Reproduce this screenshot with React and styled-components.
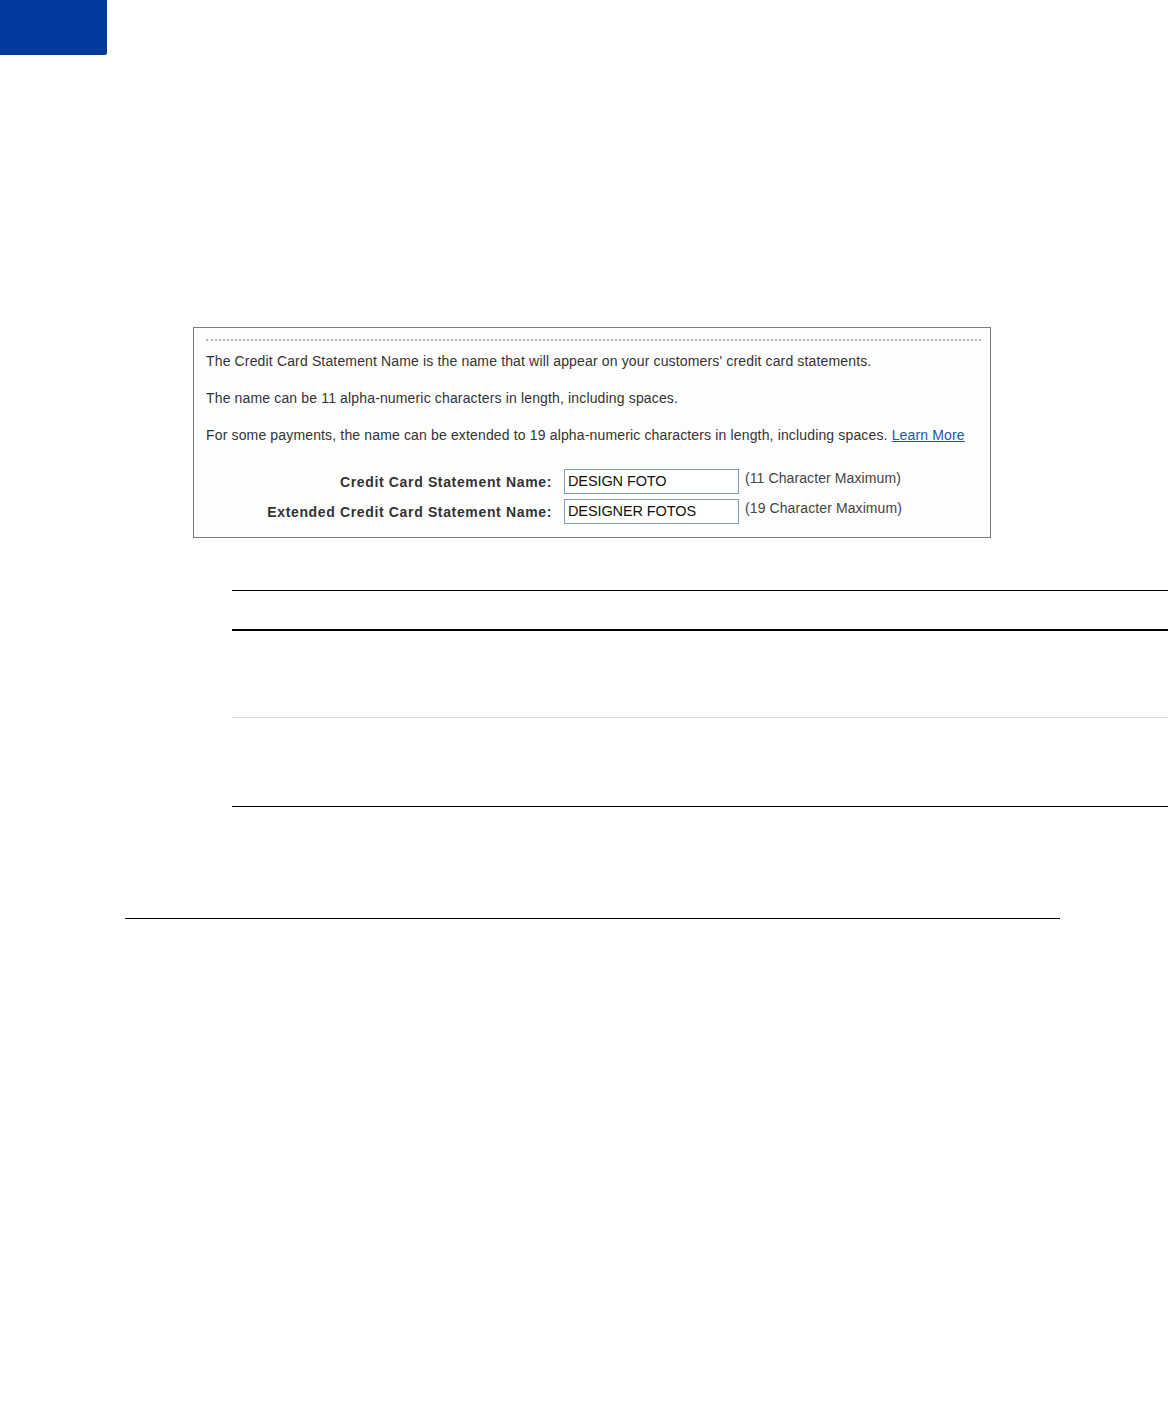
import styled, { createGlobalStyle } from "styled-components";

const GlobalStyle = createGlobalStyle`
  body {
    margin: 0;
    background: #fff;
    font-family: "Liberation Sans", Arial, sans-serif;
  }
`

const Page = styled.div`
  width: 1168px;
  height: 1414px;
  display: flex;
  flex-direction: column;
  background: #fff;
  overflow: hidden;
`
const Tab = styled.div`
  width: 107px;
  height: 55px;
  background: #003a9d;
  border-bottom-right-radius: 2px;
`
const Figure = styled.div`
  box-sizing: border-box;
  width: 798px;
  height: 211px;
  margin: 272px 0 0 193px;
  padding: 11px 9px 0 12px;
  border: 1px solid #7a7a7a;
  background: #fdfdfd;
  color: #333;
  font-size: 14px;
  letter-spacing: 0.15px;
`
const Dotted = styled.div`
  border-top: 2px dotted #b4b4b4;
  margin-bottom: 12px;
`
const Para = styled.p`
  margin: 0;
  height: 37px;
  line-height: 16px;
  white-space: nowrap;
`
const Link = styled.a`
  color: #2456a6;
  text-decoration: underline;
`
const Form = styled.div`
  display: grid;
  grid-template-columns: 346px 175px auto;
  column-gap: 12px;
  row-gap: 5px;
  margin-top: 5px;
  align-items: center;
`
const Label = styled.label`
  text-align: right;
  font-weight: bold;
  font-size: 14px;
  letter-spacing: 0.65px;
  color: #333;
`
const Input = styled.div`
  box-sizing: border-box;
  height: 25px;
  border: 1px solid #7f9db9;
  background: #fff;
  padding: 3px 0 0 3px;
  font-size: 14.5px;
  letter-spacing: -0.1px;
  color: #111;
  white-space: nowrap;
`
const Hint = styled.span`
  margin-left: -6px;
  margin-top: -8px;
  font-size: 14px;
  letter-spacing: 0.1px;
  color: #444;
`
const Table = styled.div`
  margin: 52px 0 0 232px;
  width: 936px;
  border-top: 1px solid #000;
`
const Row = styled.div`
  height: ${p => p.$h}px;
  border-bottom: ${p => p.$b};
`
const Rule = styled.div`
  margin: 111px 0 0 125px;
  width: 935px;
  border-top: 1px solid #000;
`

const fields = [
  { label: "Credit Card Statement Name:", value: "DESIGN FOTO", hint: "(11 Character Maximum)" },
  { label: "Extended Credit Card Statement Name:", value: "DESIGNER FOTOS", hint: "(19 Character Maximum)" },
]

function App() {
  return (
    <Page>
      <GlobalStyle />
      <Tab />
      <Figure>
        <Dotted />
        <Para>The Credit Card Statement Name is the name that will appear on your customers' credit card statements.</Para>
        <Para>The name can be 11 alpha-numeric characters in length, including spaces.</Para>
        <Para>For some payments, the name can be extended to 19 alpha-numeric characters in length, including spaces. <Link href="#">Learn More</Link></Para>
        <Form>
          {fields.map(f => (
            <>
              <Label key={f.label}>{f.label}</Label>
              <Input>{f.value}</Input>
              <Hint>{f.hint}</Hint>
            </>
          ))}
        </Form>
      </Figure>
      <Table>
        <Row $h={38} $b="2px solid #000" />
        <Row $h={86} $b="1px solid #d9d9d9" />
        <Row $h={88} $b="1px solid #000" />
      </Table>
      <Rule />
    </Page>
  )
}

export default App;
